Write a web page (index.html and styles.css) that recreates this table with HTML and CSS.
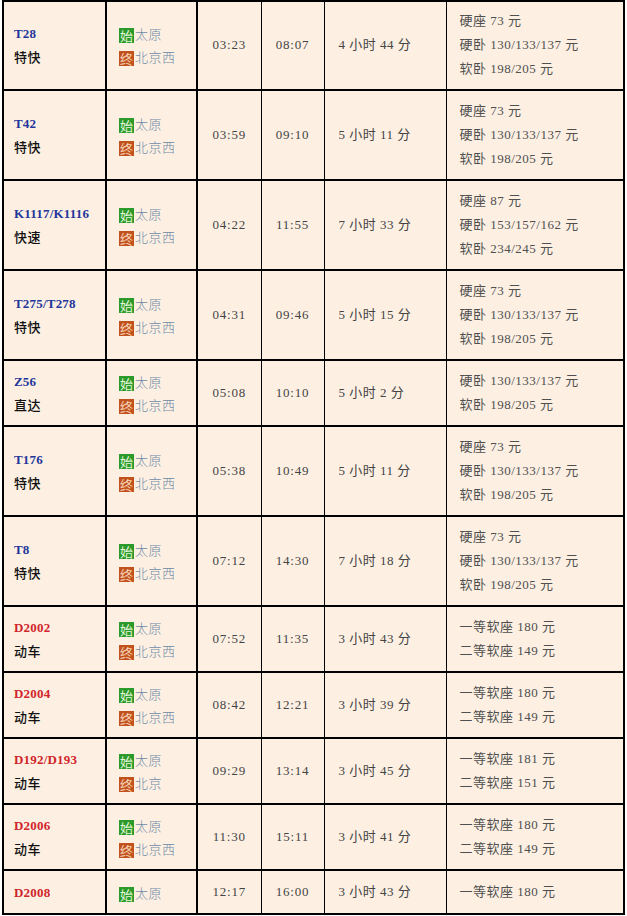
FILE: index.html
```html
<!DOCTYPE html>
<html>
<head>
<meta charset="utf-8">
<link rel="stylesheet" href="styles.css">
</head>
<body>
<table class="tt">
<colgroup>
<col class="c1"><col class="c2"><col class="c3"><col class="c4"><col class="c5"><col class="c6">
</colgroup>
<tbody>
<tr>
<td class="train"><div class="no blue">T28</div><div class="kind">特快</div></td>
<td class="st"><div><span class="ic start">始</span>太原</div><div><span class="ic end">终</span>北京西</div></td>
<td class="tm">03:23</td><td class="tm">08:07</td><td class="dur">4 小时 44 分</td>
<td class="fare"><div>硬座 73 元</div><div>硬卧 130/133/137 元</div><div>软卧 198/205 元</div></td>
</tr>
<tr>
<td class="train"><div class="no blue">T42</div><div class="kind">特快</div></td>
<td class="st"><div><span class="ic start">始</span>太原</div><div><span class="ic end">终</span>北京西</div></td>
<td class="tm">03:59</td><td class="tm">09:10</td><td class="dur">5 小时 11 分</td>
<td class="fare"><div>硬座 73 元</div><div>硬卧 130/133/137 元</div><div>软卧 198/205 元</div></td>
</tr>
<tr>
<td class="train"><div class="no blue">K1117/K1116</div><div class="kind">快速</div></td>
<td class="st"><div><span class="ic start">始</span>太原</div><div><span class="ic end">终</span>北京西</div></td>
<td class="tm">04:22</td><td class="tm">11:55</td><td class="dur">7 小时 33 分</td>
<td class="fare"><div>硬座 87 元</div><div>硬卧 153/157/162 元</div><div>软卧 234/245 元</div></td>
</tr>
<tr>
<td class="train"><div class="no blue">T275/T278</div><div class="kind">特快</div></td>
<td class="st"><div><span class="ic start">始</span>太原</div><div><span class="ic end">终</span>北京西</div></td>
<td class="tm">04:31</td><td class="tm">09:46</td><td class="dur">5 小时 15 分</td>
<td class="fare"><div>硬座 73 元</div><div>硬卧 130/133/137 元</div><div>软卧 198/205 元</div></td>
</tr>
<tr>
<td class="train"><div class="no blue">Z56</div><div class="kind">直达</div></td>
<td class="st"><div><span class="ic start">始</span>太原</div><div><span class="ic end">终</span>北京西</div></td>
<td class="tm">05:08</td><td class="tm">10:10</td><td class="dur">5 小时 2 分</td>
<td class="fare"><div>硬卧 130/133/137 元</div><div>软卧 198/205 元</div></td>
</tr>
<tr>
<td class="train"><div class="no blue">T176</div><div class="kind">特快</div></td>
<td class="st"><div><span class="ic start">始</span>太原</div><div><span class="ic end">终</span>北京西</div></td>
<td class="tm">05:38</td><td class="tm">10:49</td><td class="dur">5 小时 11 分</td>
<td class="fare"><div>硬座 73 元</div><div>硬卧 130/133/137 元</div><div>软卧 198/205 元</div></td>
</tr>
<tr>
<td class="train"><div class="no blue">T8</div><div class="kind">特快</div></td>
<td class="st"><div><span class="ic start">始</span>太原</div><div><span class="ic end">终</span>北京西</div></td>
<td class="tm">07:12</td><td class="tm">14:30</td><td class="dur">7 小时 18 分</td>
<td class="fare"><div>硬座 73 元</div><div>硬卧 130/133/137 元</div><div>软卧 198/205 元</div></td>
</tr>
<tr>
<td class="train"><div class="no red">D2002</div><div class="kind">动车</div></td>
<td class="st"><div><span class="ic start">始</span>太原</div><div><span class="ic end">终</span>北京西</div></td>
<td class="tm">07:52</td><td class="tm">11:35</td><td class="dur">3 小时 43 分</td>
<td class="fare"><div>一等软座 180 元</div><div>二等软座 149 元</div></td>
</tr>
<tr>
<td class="train"><div class="no red">D2004</div><div class="kind">动车</div></td>
<td class="st"><div><span class="ic start">始</span>太原</div><div><span class="ic end">终</span>北京西</div></td>
<td class="tm">08:42</td><td class="tm">12:21</td><td class="dur">3 小时 39 分</td>
<td class="fare"><div>一等软座 180 元</div><div>二等软座 149 元</div></td>
</tr>
<tr>
<td class="train"><div class="no red">D192/D193</div><div class="kind">动车</div></td>
<td class="st"><div><span class="ic start">始</span>太原</div><div><span class="ic end">终</span>北京</div></td>
<td class="tm">09:29</td><td class="tm">13:14</td><td class="dur">3 小时 45 分</td>
<td class="fare"><div>一等软座 181 元</div><div>二等软座 151 元</div></td>
</tr>
<tr>
<td class="train"><div class="no red">D2006</div><div class="kind">动车</div></td>
<td class="st"><div><span class="ic start">始</span>太原</div><div><span class="ic end">终</span>北京西</div></td>
<td class="tm">11:30</td><td class="tm">15:11</td><td class="dur">3 小时 41 分</td>
<td class="fare"><div>一等软座 180 元</div><div>二等软座 149 元</div></td>
</tr>
<tr>
<td class="train"><div class="no red">D2008</div></td>
<td class="st"><div><span class="ic start">始</span>太原</div></td>
<td class="tm">12:17</td><td class="tm">16:00</td><td class="dur">3 小时 43 分</td>
<td class="fare"><div>一等软座 180 元</div></td>
</tr>
</tbody>
</table>
</body>
</html>
```

FILE: styles.css
```css
html, body {
  margin: 0;
  padding: 0;
  background: #ffffff;
}
body {
  padding: 0 0 0 2px;
}
.tt {
  border-collapse: collapse;
  table-layout: fixed;
  width: 623px;
  background: #fdf0e3;
  font-family: "Liberation Serif", "Noto Sans CJK SC", serif;
  font-size: 13px;
  color: #444;
  letter-spacing: 0.5px;
}
.c1 { width: 103px; }
.c2 { width: 91px; }
.c3 { width: 64px; }
.c4 { width: 63px; }
.c5 { width: 122px; }
.c6 { width: 178px; }
.tt td {
  border-top: 2px solid #000;
  border-bottom: 2px solid #000;
  border-left: 1px solid #000;
  border-right: 1px solid #000;
  padding: 8px 0;
  vertical-align: middle;
  line-height: 24px;
  white-space: nowrap;
}
.tt tr:first-child td {
  padding-top: 7px;
}
.tt tr:last-child td {
  padding-top: 9px;
  padding-bottom: 9px;
}
.tt td.train {
  border-left: 2px solid #000;
  border-right: 2px solid #000;
  padding-left: 10px;
  line-height: 23px;
}
.tt td.st {
  border-right: 2px solid #000;
  padding-left: 12px;
  line-height: 23px;
  color: #6f8aa6;
  font-family: "Noto Sans CJK SC", sans-serif;
  font-weight: 300;
}
.tt td.tm {
  text-align: center;
  letter-spacing: 0.8px;
}
.tt td.dur {
  padding-left: 14px;
}
.tt td.fare {
  border-right: 2px solid #000;
  padding-left: 13px;
  color: #4f4f4f;
}
.no {
  font-weight: bold;
  font-size: 13px;
  letter-spacing: 0.2px;
}
.blue { color: #22359a; }
.red { color: #d0252a; }
.kind {
  font-family: "Noto Sans CJK SC", sans-serif;
  color: #111;
  font-size: 13px;
  font-weight: 500;
}
.ic {
  display: inline-block;
  width: 15px;
  height: 15px;
  line-height: 15px;
  font-size: 13px;
  text-align: center;
  vertical-align: -2px;
  letter-spacing: 0;
  margin-right: 1px;
  font-weight: 400;
}
.start {
  background: #2b9a2a;
  color: #e6f7dc;
}
.end {
  background: #c2521d;
  color: #f7d6b8;
}
```
